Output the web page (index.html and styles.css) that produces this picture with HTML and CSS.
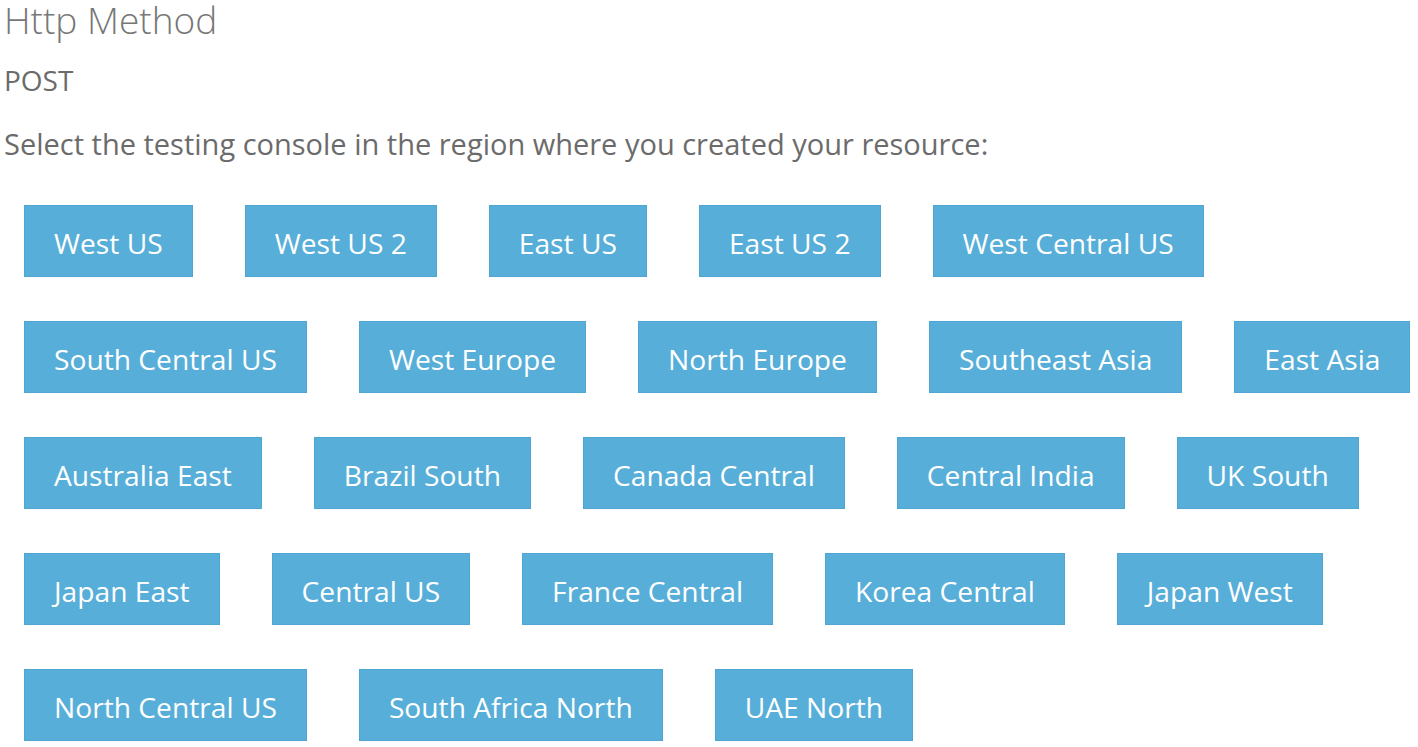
FILE: index.html
```html
<!DOCTYPE html>
<html>
<head>
<meta charset="utf-8">
<link rel="stylesheet" href="styles.css">
</head>
<body>
<div class="page">
  <h1 class="title">Http Method</h1>
  <div class="method">POST</div>
  <p class="prompt">Select the testing console in the region where you created your resource:</p>
  <div class="regions">
    <div class="row">
      <a class="btn">West US</a>
      <a class="btn">West US 2</a>
      <a class="btn">East US</a>
      <a class="btn">East US 2</a>
      <a class="btn">West Central US</a>
    </div>
    <div class="row">
      <a class="btn">South Central US</a>
      <a class="btn">West Europe</a>
      <a class="btn">North Europe</a>
      <a class="btn">Southeast Asia</a>
      <a class="btn">East Asia</a>
    </div>
    <div class="row">
      <a class="btn">Australia East</a>
      <a class="btn">Brazil South</a>
      <a class="btn">Canada Central</a>
      <a class="btn">Central India</a>
      <a class="btn">UK South</a>
    </div>
    <div class="row">
      <a class="btn">Japan East</a>
      <a class="btn">Central US</a>
      <a class="btn">France Central</a>
      <a class="btn">Korea Central</a>
      <a class="btn">Japan West</a>
    </div>
    <div class="row">
      <a class="btn">North Central US</a>
      <a class="btn">South Africa North</a>
      <a class="btn">UAE North</a>
    </div>
  </div>
</div>
</body>
</html>
```
FILE: styles.css
```css
html, body {
  margin: 0;
  padding: 0;
  background: #ffffff;
}
body {
  font-family: "Open Sans", "Noto Sans", "Liberation Sans", sans-serif;
  color: #6b6b6b;
  overflow: hidden;
}
.page {
  padding: 0 0 0 4px;
}
.title {
  margin: 0;
  font-size: 37px;
  font-weight: 300;
  line-height: 40px;
  color: #777777;
}
.method {
  margin-top: 22px;
  font-size: 28px;
  line-height: 36px;
}
.prompt {
  margin: 28px 0 0 0;
  font-size: 29px;
  line-height: 36px;
}
.regions {
  margin: 43px 0 0 20px;
  display: flex;
  flex-direction: column;
  gap: 44px;
}
.row {
  display: flex;
  gap: 52px;
}
.btn {
  display: flex;
  align-items: center;
  height: 72px;
  box-sizing: border-box;
  padding: 3px 29px 0 29px;
  background: #57aed8;
  border: 1px solid #4fa6d2;
  color: #ffffff;
  font-size: 28.2px;
  white-space: nowrap;
}
```
